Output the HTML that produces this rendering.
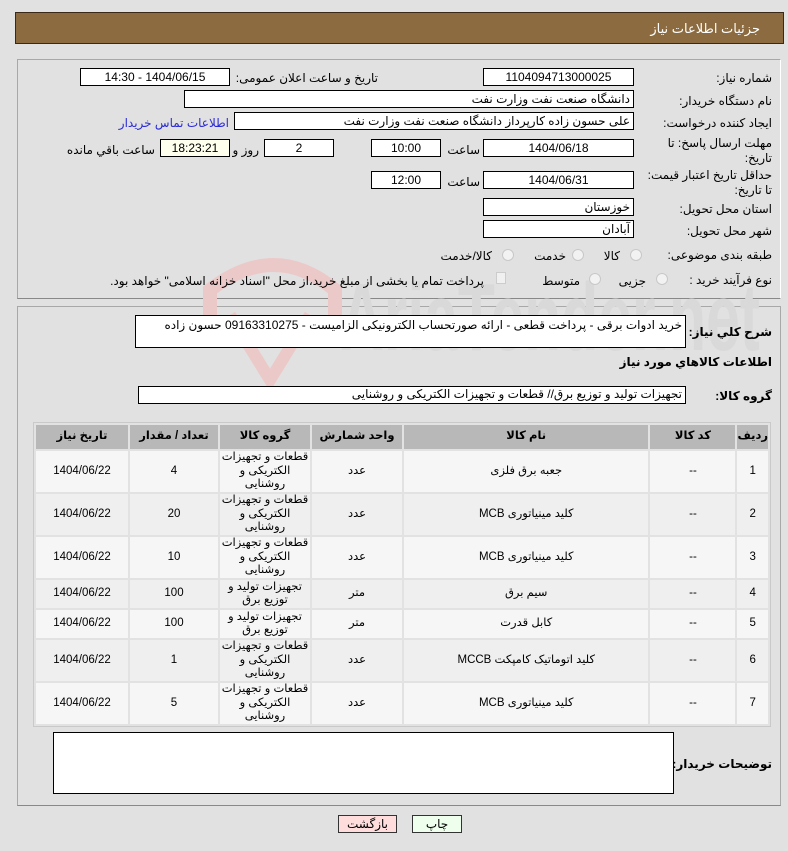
<!DOCTYPE html>
<html><head><meta charset="utf-8"><style>
*{box-sizing:border-box;margin:0;padding:0}
body{width:788px;height:851px;background:#e1e1e1;font-family:"Liberation Sans","DejaVu Sans",sans-serif;font-size:12px;color:#000;position:relative;overflow:hidden;direction:rtl}
.a{position:absolute}
.box{position:absolute;background:#fff;border:1px solid #000;height:18px;line-height:16px;padding:0 3px;white-space:nowrap;overflow:hidden}
.c{text-align:center}
.lbl{position:absolute;white-space:nowrap;text-align:right}
.b{font-weight:bold;font-size:12px;letter-spacing:-0.4px}
.rad{position:absolute;width:12px;height:12px;border-radius:50%;border:1px solid #c8c8c8;background:#f2f2f2}
table{position:absolute;left:33px;top:422px;width:738px;border-collapse:separate;border-spacing:2px;background:#e2e2e2;border:1px solid #c9c9c9}
td,th{text-align:center;font-size:11.5px;line-height:13.5px}
th{background:#b8b8b8;height:24px;font-weight:bold}
tr.o td{background:#f6f6f6}
tr.e td{background:#efefef}
</style></head><body>
<div class="a" style="left:15px;top:12px;width:769px;height:32px;background:#8b6b3f;border:1px solid #3a2a15"></div>
<div class="lbl" style="right:28px;top:21px;color:#fff;font-size:13px">جزئیات اطلاعات نیاز</div>

<div class="a" style="left:17px;top:59px;width:764px;height:240px;border:1px solid #a8a8a8;border-right-color:#fff;border-bottom-color:#888"></div>
<div class="a" style="left:17px;top:306px;width:764px;height:500px;border:1px solid #a8a8a8;border-bottom-color:#888"></div>

<!-- watermark -->
<svg class="a" style="left:180px;top:240px" width="600" height="160" viewBox="0 0 600 160">
<path d="M30 95 L30 50 Q95 0 155 50 L155 95" fill="none" stroke="#ecc9c9" stroke-width="14"/>
<path d="M50 75 L90 140 L130 75" fill="none" stroke="#ecc9c9" stroke-width="12"/>
<text x="160" y="110" font-family="Liberation Sans" font-size="96" font-weight="bold" fill="#d9d9d9" direction="ltr" textLength="420" lengthAdjust="spacingAndGlyphs">AriaTender.net</text>
</svg>

<div class="lbl" style="right:16px;top:71px">شماره نیاز:</div>
<div class="box c" style="left:483px;top:68px;width:151px">1104094713000025</div>
<div class="lbl" style="right:410px;top:71px">تاریخ و ساعت اعلان عمومی:</div>
<div class="box c" style="left:80px;top:68px;width:150px">1404/06/15 - 14:30</div>

<div class="lbl" style="right:16px;top:94px">نام دستگاه خریدار:</div>
<div class="box" style="left:184px;top:90px;width:450px;text-align:right">دانشگاه صنعت نفت وزارت نفت</div>

<div class="lbl" style="right:16px;top:116px">ایجاد کننده درخواست:</div>
<div class="box" style="left:234px;top:112px;width:400px;text-align:right">علی حسون زاده کارپرداز دانشگاه صنعت نفت وزارت نفت</div>
<div class="lbl" style="right:559px;top:116px;color:#2a2ad8">اطلاعات تماس خریدار</div>

<div class="lbl" style="right:16px;top:136px;line-height:15px">مهلت ارسال پاسخ: تا<br>تاریخ:</div>
<div class="box c" style="left:483px;top:139px;width:151px">1404/06/18</div>
<div class="lbl" style="right:308px;top:143px">ساعت</div>
<div class="box c" style="left:371px;top:139px;width:70px">10:00</div>
<div class="box c" style="left:264px;top:139px;width:70px">2</div>
<div class="lbl" style="right:529px;top:143px">روز و</div>
<div class="box c" style="left:160px;top:139px;width:70px;background:#ffffee">18:23:21</div>
<div class="lbl" style="right:633px;top:143px">ساعت باقي مانده</div>

<div class="lbl" style="right:16px;top:168px;line-height:15px">حداقل تاریخ اعتبار قیمت:<br>تا تاریخ:</div>
<div class="box c" style="left:483px;top:171px;width:151px">1404/06/31</div>
<div class="lbl" style="right:308px;top:175px">ساعت</div>
<div class="box c" style="left:371px;top:171px;width:70px">12:00</div>

<div class="lbl" style="right:16px;top:202px">استان محل تحویل:</div>
<div class="box" style="left:483px;top:198px;width:151px;text-align:right">خوزستان</div>
<div class="lbl" style="right:16px;top:224px">شهر محل تحویل:</div>
<div class="box" style="left:483px;top:220px;width:151px;text-align:right">آبادان</div>

<div class="lbl" style="right:16px;top:248px">طبقه بندی موضوعی:</div>
<div class="rad" style="left:630px;top:249px"></div><div class="lbl" style="right:168px;top:249px">کالا</div>
<div class="rad" style="left:572px;top:249px"></div><div class="lbl" style="right:222px;top:249px">خدمت</div>
<div class="rad" style="left:502px;top:249px"></div><div class="lbl" style="right:296px;top:249px">کالا/خدمت</div>

<div class="lbl" style="right:16px;top:273px">نوع فرآیند خرید :</div>
<div class="rad" style="left:656px;top:273px"></div><div class="lbl" style="right:142px;top:274px">جزیی</div>
<div class="rad" style="left:589px;top:273px"></div><div class="lbl" style="right:208px;top:274px">متوسط</div>
<div class="a" style="left:496px;top:272px;width:10px;height:12px;border:1px solid #ccc;background:#f0f0f0"></div>
<div class="lbl" style="right:304px;top:274px">پرداخت تمام یا بخشی از مبلغ خرید،از محل "اسناد خزانه اسلامی" خواهد بود.</div>

<div class="lbl b" style="right:16px;top:325px">شرح کلي نیاز:</div>
<div class="a" style="left:135px;top:315px;width:551px;height:33px;background:#fff;border:1px solid #000;padding:2px 3px;text-align:right;line-height:15px">خرید ادوات برقی - پرداخت قطعی - ارائه صورتحساب الکترونیکی الزامیست - 09163310275 حسون زاده</div>

<div class="lbl b" style="right:16px;top:355px">اطلاعات کالاهاي مورد نياز</div>
<div class="lbl b" style="right:16px;top:389px">گروه کالا:</div>
<div class="box" style="left:138px;top:386px;width:548px;text-align:right;line-height:15px">تجهیزات تولید و توزیع برق// قطعات و تجهیزات الکتریکی و روشنایی</div>

<table>
<tr><th style="width:26px">ردیف</th><th style="width:85px">کد کالا</th><th>نام کالا</th><th style="width:90px">واحد شمارش</th><th style="width:90px">گروه کالا</th><th style="width:88px">تعداد / مقدار</th><th style="width:92px">تاریخ نیاز</th></tr>
<tr class="o" style="height:41px"><td>1</td><td>--</td><td>جعبه برق فلزی</td><td>عدد</td><td>قطعات و تجهیزات الکتریکی و روشنایی</td><td>4</td><td>1404/06/22</td></tr>
<tr class="e" style="height:41px"><td>2</td><td>--</td><td>کلید مینیاتوری MCB</td><td>عدد</td><td>قطعات و تجهیزات الکتریکی و روشنایی</td><td>20</td><td>1404/06/22</td></tr>
<tr class="o" style="height:41px"><td>3</td><td>--</td><td>کلید مینیاتوری MCB</td><td>عدد</td><td>قطعات و تجهیزات الکتریکی و روشنایی</td><td>10</td><td>1404/06/22</td></tr>
<tr class="e" style="height:28px"><td>4</td><td>--</td><td>سیم برق</td><td>متر</td><td>تجهیزات تولید و توزیع برق</td><td>100</td><td>1404/06/22</td></tr>
<tr class="o" style="height:28px"><td>5</td><td>--</td><td>کابل قدرت</td><td>متر</td><td>تجهیزات تولید و توزیع برق</td><td>100</td><td>1404/06/22</td></tr>
<tr class="e" style="height:41px"><td>6</td><td>--</td><td>کلید اتوماتیک کامپکت MCCB</td><td>عدد</td><td>قطعات و تجهیزات الکتریکی و روشنایی</td><td>1</td><td>1404/06/22</td></tr>
<tr class="o" style="height:41px"><td>7</td><td>--</td><td>کلید مینیاتوری MCB</td><td>عدد</td><td>قطعات و تجهیزات الکتریکی و روشنایی</td><td>5</td><td>1404/06/22</td></tr>
</table>

<div class="lbl b" style="right:16px;top:757px">توضیحات خریدار:</div>
<div class="a" style="left:53px;top:732px;width:621px;height:62px;background:#fff;border:1px solid #000"></div>

<div class="a c" style="left:338px;top:815px;width:59px;height:18px;background:#fdd;border:1px solid #333;line-height:16px">بازگشت</div>
<div class="a c" style="left:412px;top:815px;width:50px;height:18px;background:#efe;border:1px solid #333;line-height:16px">چاپ</div>
</body></html>
